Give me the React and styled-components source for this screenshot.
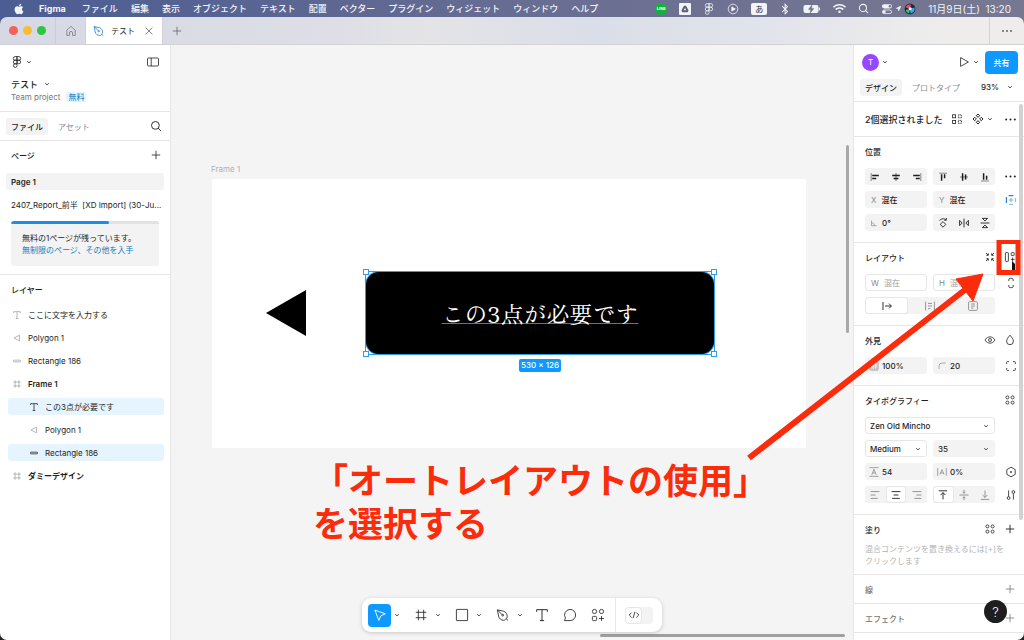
import React from 'react'
import styled, { createGlobalStyle, css } from "styled-components";
import { FaApple, FaBluetoothB, FaWifi, FaLocationArrow } from "react-icons/fa"

const GlobalStyle = createGlobalStyle`
  * {
    box-sizing: border-box;
  }
  body {
    margin: 0;
    font-family: Inter, "Noto Sans CJK JP", sans-serif;
    font-size: 8px;
    color: #1e1e1e;
  }
  button, input, select {
    font: inherit;
    color: inherit;
    border: 0;
    padding: 0;
    margin: 0;
    background: none;
  }
  h1, h2, p, ul {
    margin: 0;
    padding: 0;
    font-size: inherit;
    font-weight: inherit;
  }
  ul {
    list-style: none;
  }
`;

// every glyph lives in a 12 x 12 box
const glyphs = {
  figma: <><path d="M6 .6H4.1a1.8 1.8 0 0 0 0 3.6H6zM6 .6h1.9a1.8 1.8 0 0 1 0 3.6H6zM6 4.2H4.1a1.8 1.8 0 0 0 0 3.6H6zM6 7.8H4.1A1.8 1.8 0 1 0 6 9.6z" /><circle cx="7.8" cy="6" r="1.8" /></>,
  chevron: <path d="M4.2 5.2 6 6.9l1.8-1.7" />,
  panel: <><rect x=".5" y="2" width="11" height="8" rx="1" /><path d="M4.2 2v8" /></>,
  search: <><circle cx="5.4" cy="5.4" r="3.9" /><path d="m8.2 8.2 2.8 2.8" /></>,
  plus: <path d="M6 1.8v8.4M1.8 6h8.4" />,
  close: <path d="m2.6 2.6 6.8 6.8m0-6.8L2.6 9.4" />,
  home: <path d="M1.8 5.2 6 1.4l4.2 3.8v5.2H7.6V8a1.6 1.6 0 0 0-3.2 0v2.4H1.8z" />,
  pen: <><path d="M1.2 1.6 6.4 2.7c2 .5 3.5 2.8 3.2 4.9l-.1.7-2.2 2.1-.8.1C4.4 10.5 2.6 9 2.2 6.9zM1.2 1.6l3.9 4M8.7 9.3l1.6 1.3" /><circle cx="5.7" cy="6.1" r=".8" /></>,
  text: <path d="M2 3.6V2h8v1.6M6 2v8.2M4.4 10.2h3.2" />,
  polygon: <path d="M9 2.6v6.8L2.4 6z" />,
  bar: <rect x="1.8" y="5" width="8.4" height="2" rx=".4" />,
  frame: <path d="M3.7 1.5v9M8.3 1.5v9M1.5 3.7h9M1.5 8.3h9" />,
  play: <path d="M2.6 1.6 10.4 6l-7.8 4.4z" strokeLinejoin="round" />,
  playCircle: <><circle cx="6" cy="6" r="4.8" /><path d="M4.8 3.9 8.3 6l-3.5 2.1z" fill="currentColor" /></>,
  dots: <g fill="currentColor" stroke="none"><circle cx="2" cy="6" r=".9" /><circle cx="6" cy="6" r=".9" /><circle cx="10" cy="6" r=".9" /></g>,
  match: <><rect x="1.6" y="1.8" width="3" height="3" /><rect x="1.6" y="7.4" width="3" height="3" /><rect x="7.4" y="1.8" width="3" height="3" strokeDasharray="1.2 .5" /><rect x="7.4" y="7.4" width="3" height="3" strokeDasharray="1.2 .5" /></>,
  component: <path d="m6 1 1.7 1.7L6 4.4 4.3 2.7zM6 7.6l1.7 1.7L6 11 4.3 9.3zM2.7 4.3 4.4 6 2.7 7.7 1 6zM9.3 4.3 11 6 9.3 7.7 7.6 6z" strokeWidth="1" />,
  alignLeft: <><path d="M2.2 2v8" strokeWidth=".5" /><path d="M3.2 4.6h6.6M3.2 7.6h4" strokeWidth="1.5" /></>,
  alignCenter: <><path d="M6 2v8" strokeWidth=".6" /><path d="M2.2 4.6h7.6M3.6 7.6h4.8" strokeWidth="1.5" /></>,
  alignRight: <><path d="M9.8 2v8" strokeWidth=".5" /><path d="M8.8 4.6H2.2M8.8 7.6h-4" strokeWidth="1.5" /></>,
  alignTop: <><path d="M2 2.2h8" strokeWidth=".5" /><path d="M4.6 3.2v6.6M7.6 3.2v4" strokeWidth="1.5" /></>,
  alignMiddle: <><path d="M2 6h8" strokeWidth=".6" /><path d="M4.6 2.2v7.6M7.6 3.6v4.8" strokeWidth="1.5" /></>,
  alignBottom: <><path d="M2 10h8" strokeWidth=".5" /><path d="M4.6 8.8V2.2M7.6 8.8v-4" strokeWidth="1.5" /></>,
  constraint: <><path d="M1.4 3v6" strokeWidth="1.2" /><path d="M10.6 4v4" strokeWidth=".6" /><path d="M3.6 1.6h4.800" strokeWidth="1.2" /><path d="M4 10.4h4M6 3.8v4.4M3.8 6h4.4" strokeWidth=".6" /></>,
  angle: <path d="M3 3v6.2h6.2M3 5.6a3.6 3.6 0 0 1 3.6 3.6" />,
  rotate: <><path d="m6 4.6 2.8 2.8L6 10.2 3.2 7.4z" strokeLinejoin="round" /><path d="M2.600 3.600c1.600-2.200 4.600-2.400 6.400-.6M9.300 1v2.200H7.200" /></>,
  flipH: <path d="M6 1.6v8.8M1.6 3.4v5.2L4.2 6zM10.4 3.4v5.2L7.8 6z" />,
  flipV: <path d="M1.6 6h8.8M3.4 1.4h5.2L6 4zM3.4 10.6h5.2L6 8z" />,
  shrink: <path d="M4.300 2.400v1.900H2.400M7.700 2.400v1.900h1.900M4.300 9.600V7.700H2.400M7.700 9.600V7.700h1.900M2 2l2 2M10 2 8 4M2 10l2-2M10 10 8 8" strokeWidth=".9" />,
  autoLayout: <><rect x="1.4" y="1.6" width="3" height="8.8" rx=".6" /><rect x="7.2" y="1.6" width="3" height="3" rx=".6" /><path d="M8.7 6.4v4M6.8 8.4h3.8" /></>,
  link: <path d="M3.8 4V2.8a1.4 1.4 0 0 1 1.4-1.4h1.6a1.4 1.4 0 0 1 1.4 1.4V4M3.8 8v1.2a1.4 1.4 0 0 0 1.4 1.4h1.6a1.4 1.4 0 0 0 1.4-1.4V8" />,
  autoWidth: <path d="M2 2v8M4 6h6.4M8 3.6 10.4 6 8 8.4" />,
  autoHeight: <path d="M1.6 1.6v8.8M10.4 1.6v8.8M4 3.4h4M4 6h4M4 8.6h2.4" />,
  fixedSize: <><rect x="1.6" y="1.6" width="8.8" height="8.8" rx="1" /><path d="M4 4h4M4 6h4M4 8h2.4" /></>,
  eye: <><path d="M1 6c2.6-4.2 7.4-4.2 10 0-2.6 4.2-7.4 4.2-10 0z" /><circle cx="6" cy="6" r="1.5" /></>,
  drop: <path d="M6 1.2c2 2.4 3.4 4 3.4 6A3.4 3.4 0 0 1 6 10.7a3.4 3.4 0 0 1-3.4-3.5c0-2 1.400-3.600 3.400-6z" />,
  opacity: <><rect x="1.200" y="1.200" width="9.600" height="9.600" rx=".6" /><path d="M8.800 1.800v8.400M6.600 1.800v8.400M4 10.200V8M1.800 8.600h8.400" strokeWidth=".3" /></>,
  radius: <path d="M2.4 9.6V6a3.600 3.600 0 0 1 3.600-3.600h4.400" />,
  corners: <path d="M1.6 4V2.6a1 1 0 0 1 1-1H4M8 1.6h1.4a1 1 0 0 1 1 1V4M10.4 8v1.4a1 1 0 0 1-1 1H8M4 10.4H2.6a1 1 0 0 1-1-1V8" />,
  styles: <><circle cx="3.4" cy="3.4" r="1.5" /><circle cx="8.6" cy="3.4" r="1.5" /><circle cx="3.4" cy="8.6" r="1.5" /><circle cx="8.6" cy="8.6" r="1.5" /></>,
  lineHeight: <path d="M.6.8h10.800M.6 11.200h10.800M3.400 9.200 6 2.800l2.600 6.400M4.300 7.200h3.400" />,
  spacing: <path d="M.8 1.4v9.2M11.2 1.4v9.2M3.6 9 6 3.2 8.4 9M4.4 7.2h3.2" />,
  variable: <><path d="m6 1.2 4.2 2.4v4.8L6 10.8 1.8 8.4V3.6z" strokeLinejoin="round" /><circle cx="6" cy="6" r=".5" fill="currentColor" /></>,
  textLeft: <path d="M1.6 2.6h8.8M1.6 6h5M1.6 9.4h7" />,
  textCenter: <path d="M1.6 2.6h8.8M3.6 6h4.8M2.2 9.4h7.6" />,
  textRight: <path d="M1.6 2.6h8.8M5.4 6h5M3.4 9.4h7" />,
  toTop: <path d="M1.8 1.8h8.4M6 10.4V3.6M3.6 6 6 3.6 8.4 6" />,
  toMiddle: <path d="M1.4 6h9.2M6 .8v3.4M4.6 3 6 4.3 7.4 3M6 11.2V7.8M4.6 9 6 7.7 7.4 9" />,
  toBottom: <path d="M1.8 10.4h8.4M6 1.6v6.8M3.6 6 6 8.4 8.4 6" />,
  sliders: <><path d="M3.6 1.4v6.2M8.4 4.4v6.2" /><circle cx="3.6" cy="9" r="1.4" /><circle cx="8.4" cy="3" r="1.4" /></>,
  cursor: <path d="m1.6 1.8 9 3.2-3.9 1.7L5 10.6z" strokeLinejoin="round" />,
  square: <rect x="1.2" y="1.2" width="9.6" height="9.6" rx=".3" />,
  bubble: <path d="M6 1.2a4.8 4.8 0 1 1 0 9.6H1.200l.9-2.200A4.800 4.800 0 0 1 6 1.200z" strokeLinejoin="round" />,
  actions: <><circle cx="3" cy="3" r="1.8" /><circle cx="9" cy="3" r="1.8" /><rect x="1.2" y="7.2" width="3.6" height="3.6" rx=".8" /><path d="M9 6.9v4.2M6.9 9h4.2" /></>,
  code: <path d="M3.6 3.6 1.2 6l2.4 2.4M8.4 3.6 10.8 6 8.4 8.4M7 2.8 5 9.2" />,
  drive: <><rect width="12" height="12" rx="1" fill="#f2f3f7" stroke="none" /><path d="M5 2.8h2l2.6 4.6-1 1.8H3.4l-1-1.8z" fill="#5a5f74" stroke="none" /><path d="m6 5 1.3 2.2H4.7z" fill="#f2f3f7" stroke="none" /></>,
  siri: <><circle cx="6" cy="6" r="5.4" fill="#26262e" stroke="none" /><path d="M6 6 1.6 4.4A4.6 4.6 0 0 1 7 1.6z" fill="#f0467e" stroke="none" /><path d="m6 6 4.400-1.600A4.600 4.600 0 0 1 6.600 10.400z" fill="#33a9f0" stroke="none" /><path d="M6 6 5 10.400A4.600 4.600 0 0 1 1.600 7z" fill="#32c28c" stroke="none" /><circle cx="6.2" cy="5.8" r="1.5" fill="#fff" stroke="none" /></>,
  controls: <><rect x="1" y="1.2" width="10" height="4.2" rx="2.1" fill="currentColor" stroke="none" /><circle cx="8.9" cy="3.3" r="1.3" fill="#74779a" stroke="none" /><rect x="1.4" y="7" width="9.2" height="3.6" rx="1.8" /><circle cx="3.2" cy="8.8" r="1.5" fill="currentColor" stroke="none" /></>,
}

const Icon = ({ name, size = 12, weight = 0.8, color }) => (
  <Glyph viewBox="0 0 12 12" width={size} height={size} strokeWidth={weight} color={color} aria-hidden="true">
    {glyphs[name]}
  </Glyph>
)

const menus = ["ファイル", "編集", "表示", "オブジェクト", "テキスト", "配置", "ベクター", "プラグイン", "ウィジェット", "ウィンドウ", "ヘルプ"]

const layers = [
  { icon: "text", name: "ここに文字を入力する" },
  { icon: "polygon", name: "Polygon 1" },
  { icon: "bar", name: "Rectangle 186" },
  { icon: "frame", name: "Frame 1", bold: true },
  { icon: "text", name: "この3点が必要です", child: true, selected: true },
  { icon: "polygon", name: "Polygon 1", child: true },
  { icon: "bar", name: "Rectangle 186", child: true, selected: true },
  { icon: "frame", name: "ダミーデザイン", bold: true },
]

const MenuBar = () => (
  <MenuWrapper>
    <FaApple size={12} />
    <MenuList>
      <MenuButton $bold>Figma</MenuButton>
      {menus.map((menu) => <MenuButton key={menu}>{menu}</MenuButton>)}
    </MenuList>
    <StatusList>
      <LineBadge>LINE</LineBadge>
      <Icon name="drive" />
      <Icon name="figma" />
      <Icon name="playCircle" />
      <InputSource>あ</InputSource>
      <FaBluetoothB size={12} />
      <svg width="18" height="10" viewBox="0 0 18 10" aria-hidden="true">
        <rect x=".5" y="1" width="15" height="8" rx="2" fill="#f2f3f7" />
        <path d="M16.5 3.6v2.8" stroke="#f2f3f7" />
        <path d="M9.2.6 5.4 5.6h2.4L7 9.4l3.8-5H8.4z" fill="#6b6f8c" stroke="#6b6f8c" strokeWidth=".4" />
      </svg>
      <FaWifi size={13} />
      <Icon name="search" size={11} weight={1.1} />
      <StatusGroup>
        <Icon name="controls" />
        <FaLocationArrow size={5} />
        <Icon name="siri" />
      </StatusGroup>
      <Clock>11月9日(土)&nbsp; 13:20</Clock>
    </StatusList>
  </MenuWrapper>
)

const TabBar = () => (
  <TabWrapper>
    <Lights>
      <Light $color="#f4605a" />
      <Light $color="#f8bc33" />
      <Light $color="#2cc640" />
    </Lights>
    <HomeButton aria-label="ホーム"><Icon name="home" color="#777" /></HomeButton>
    <FileTab>
      <Icon name="pen" color="#1b7fc4" />
      <span>テスト</span>
      <IconButton aria-label="閉じる"><Icon name="close" color="#666" /></IconButton>
    </FileTab>
    <NewTab aria-label="新規タブ"><Icon name="plus" color="#666" /></NewTab>
    <MoreTab aria-label="その他"><Icon name="dots" color="#555" /></MoreTab>
  </TabWrapper>
)

const LeftPanel = () => (
  <LeftWrapper>
    <FileHeader>
      <HeaderRow>
        <LogoButton aria-label="メインメニュー"><Icon name="figma" /><Icon name="chevron" /></LogoButton>
        <IconButton aria-label="UIを最小化"><Icon name="panel" /></IconButton>
      </HeaderRow>
      <FileName>テスト<Icon name="chevron" /></FileName>
      <Project>Team project <PlanBadge>無料</PlanBadge></Project>
    </FileHeader>
    <PanelTabs>
      <PanelTab $active>ファイル</PanelTab>
      <PanelTab>アセット</PanelTab>
      <IconButton aria-label="検索"><Icon name="search" weight={0.9} /></IconButton>
    </PanelTabs>
    <Pages>
      <PanelTitle>
        <h2>ページ</h2>
        <IconButton aria-label="ページを追加"><Icon name="plus" /></IconButton>
      </PanelTitle>
      <PageButton $active>Page 1</PageButton>
      <PageButton>2407_Report_前半&nbsp; [XD Import] (30-Ju...</PageButton>
      <Quota>
        <QuotaBar><QuotaFill /></QuotaBar>
        <QuotaText>
          <p>無料の1ページが残っています。</p>
          <a href="#upgrade">無制限のページ、その他を入手</a>
        </QuotaText>
      </Quota>
    </Pages>
    <PanelTitle><h2>レイヤー</h2></PanelTitle>
    <LayerList>
      {layers.map((layer, i) => (
        <li key={i}>
          <LayerButton $bold={layer.bold} $child={layer.child} $selected={layer.selected}>
            <Icon name={layer.icon} size={10} weight={1} color={layer.selected ? "#333" : "#aaa"} />
            {layer.name}
          </LayerButton>
        </li>
      ))}
    </LayerList>
  </LeftWrapper>
)

const Canvas = () => (
  <CanvasWrapper>
    <FrameLabel>Frame 1</FrameLabel>
    <Frame>
      <Triangle viewBox="0 0 40 46"><path d="M40 0v46L0 23z" /></Triangle>
      <Selection>
        <Shape><ShapeText>この3点が必要です</ShapeText></Shape>
        <Handle $top $left /><Handle $top /><Handle $left /><Handle />
        <SizeBadge>530 × 126</SizeBadge>
      </Selection>
    </Frame>
    <ScrollY />
    <ScrollX />
    <Toolbar>
      <ToolButton $active aria-label="移動"><Icon name="cursor" size={14} /></ToolButton>
      <ToolMenu aria-label="移動ツール"><Icon name="chevron" /></ToolMenu>
      <ToolButton aria-label="フレーム"><Icon name="frame" size={14} weight={0.7} /></ToolButton>
      <ToolMenu aria-label="フレームツール"><Icon name="chevron" /></ToolMenu>
      <ToolButton aria-label="長方形"><Icon name="square" size={14} weight={0.7} /></ToolButton>
      <ToolMenu aria-label="シェイプツール"><Icon name="chevron" /></ToolMenu>
      <ToolButton aria-label="ペン"><Icon name="pen" size={14} weight={0.7} /></ToolButton>
      <ToolMenu aria-label="描画ツール"><Icon name="chevron" /></ToolMenu>
      <ToolButton aria-label="テキスト"><Icon name="text" size={16} weight={0.7} /></ToolButton>
      <ToolButton aria-label="コメント"><Icon name="bubble" size={14} weight={0.7} /></ToolButton>
      <ToolButton aria-label="アクション"><Icon name="actions" size={14} weight={0.7} /></ToolButton>
      <ToolDivider />
      <DevToggle aria-label="開発モード"><DevThumb><Icon name="code" /></DevThumb></DevToggle>
    </Toolbar>
  </CanvasWrapper>
)

const Segments = ({ items, active, ...rest }) => (
  <Segment {...rest}>
    {items.map(([icon, label], i) => (
      <SegmentButton key={icon} $active={active === i} $dim={active !== undefined && active !== i} aria-label={label}>
        <Icon name={icon} weight={0.9} />
      </SegmentButton>
    ))}
  </Segment>
)

const RightPanel = () => (
  <RightWrapper>
    <RightHeader>
      <Avatar>T</Avatar>
      <Icon name="chevron" />
      <Spacer />
      <IconButton aria-label="プレゼンテーション"><Icon name="play" /></IconButton>
      <Icon name="chevron" />
      <ShareButton>共有</ShareButton>
    </RightHeader>
    <ModeTabs>
      <PanelTab $active>デザイン</PanelTab>
      <PanelTab>プロトタイプ</PanelTab>
      <Zoom>93%<Icon name="chevron" /></Zoom>
    </ModeTabs>
    <Selected>
      <h1>2個選択されました</h1>
      <IconButton aria-label="一致するレイヤー"><Icon name="match" /></IconButton>
      <LogoButton aria-label="コンポーネント"><Icon name="component" /><Icon name="chevron" /></LogoButton>
      <IconButton aria-label="その他"><Icon name="dots" size={13} /></IconButton>
    </Selected>

    <Section>
      <SectionTitle><h2>位置</h2></SectionTitle>
      <FieldGrid>
        <Segments items={[["alignLeft", "左揃え"], ["alignCenter", "水平中央"], ["alignRight", "右揃え"]]} />
        <Segments items={[["alignTop", "上揃え"], ["alignMiddle", "垂直中央"], ["alignBottom", "下揃え"]]} />
        <IconButton aria-label="整列オプション"><Icon name="dots" size={13} /></IconButton>
        <Field><i>X</i><input aria-label="X" defaultValue="混在" /></Field>
        <Field><i>Y</i><input aria-label="Y" defaultValue="混在" /></Field>
        <IconButton aria-label="制約"><Icon name="constraint" color="#2f86c9" /></IconButton>
        <Field><Icon name="angle" size={10} color="#888" /><input aria-label="回転" defaultValue="0°" /></Field>
        <Segments items={[["rotate", "90°回転"], ["flipH", "左右反転"], ["flipV", "上下反転"]]} />
      </FieldGrid>
    </Section>

    <Section>
      <SectionTitle>
        <h2>レイアウト</h2>
        <IconButton aria-label="サイズ自動調整"><Icon name="shrink" /></IconButton>
        <IconButton aria-label="オートレイアウトの使用"><Icon name="autoLayout" /></IconButton>
      </SectionTitle>
      <FieldGrid>
        <Field $outline><i>W</i><input aria-label="W" defaultValue="混在" /></Field>
        <Field $outline><i>H</i><input aria-label="H" defaultValue="混在" /></Field>
        <IconButton aria-label="縦横比を固定"><Icon name="link" /></IconButton>
        <WideSegments active={0} items={[["autoWidth", "幅の自動調整"], ["autoHeight", "高さの自動調整"], ["fixedSize", "固定サイズ"]]} />
      </FieldGrid>
    </Section>

    <Section>
      <SectionTitle>
        <h2>外見</h2>
        <IconButton aria-label="表示"><Icon name="eye" /></IconButton>
        <IconButton aria-label="ブレンドモード"><Icon name="drop" /></IconButton>
      </SectionTitle>
      <FieldGrid>
        <Field><Icon name="opacity" size={10} color="#777" /><input aria-label="不透明度" defaultValue="100%" /></Field>
        <Field><Icon name="radius" size={10} color="#888" /><input aria-label="角の半径" defaultValue="20" /></Field>
        <IconButton aria-label="個別の角"><Icon name="corners" /></IconButton>
      </FieldGrid>
    </Section>

    <Section>
      <SectionTitle>
        <h2>タイポグラフィー</h2>
        <IconButton aria-label="テキストスタイル"><Icon name="styles" /></IconButton>
      </SectionTitle>
      <FieldGrid>
        <SelectBox $wide>
          <select aria-label="フォント"><option>Zen Old Mincho</option></select>
          <Icon name="chevron" />
        </SelectBox>
        <span />
        <SelectBox>
          <select aria-label="太さ"><option>Medium</option></select>
          <Icon name="chevron" />
        </SelectBox>
        <SelectBox $filled>
          <select aria-label="文字サイズ"><option>35</option></select>
          <Icon name="chevron" />
        </SelectBox>
        <span />
        <Field><Icon name="lineHeight" size={10} color="#777" /><input aria-label="行間" defaultValue="54" /></Field>
        <Field><Icon name="spacing" size={10} color="#777" /><input aria-label="文字間隔" defaultValue="0%" /></Field>
        <IconButton aria-label="バリアブル"><Icon name="variable" /></IconButton>
        <Segments active={1} items={[["textLeft", "左"], ["textCenter", "中央"], ["textRight", "右"]]} />
        <Segments active={0} items={[["toTop", "上"], ["toMiddle", "中"], ["toBottom", "下"]]} />
        <IconButton aria-label="タイプの設定"><Icon name="sliders" /></IconButton>
      </FieldGrid>
    </Section>

    <Section $compact>
      <SectionTitle>
        <h2>塗り</h2>
        <IconButton aria-label="スタイル"><Icon name="styles" /></IconButton>
        <IconButton aria-label="塗りを追加"><Icon name="plus" weight={0.9} /></IconButton>
      </SectionTitle>
      <Note>混合コンテンツを置き換えるには[+]を<br />クリックします</Note>
    </Section>
    <Section $compact $muted>
      <SectionTitle><h2>線</h2><IconButton aria-label="線を追加"><Icon name="plus" /></IconButton></SectionTitle>
    </Section>
    <Section $compact $muted>
      <SectionTitle><h2>エフェクト</h2><IconButton aria-label="エフェクトを追加"><Icon name="plus" /></IconButton></SectionTitle>
    </Section>
    <PanelScroll />
    <HelpButton aria-label="ヘルプ">?</HelpButton>
  </RightWrapper>
)

const App = () => {
  return (
    <Desktop>
      <GlobalStyle />
      <MenuBar />
      <Window>
        <TabBar />
        <Workspace>
          <LeftPanel />
          <Canvas />
          <RightPanel />
        </Workspace>
      </Window>
      <Callout>
        <p>「オートレイアウトの使用」</p>
        <p>を選択する</p>
      </Callout>
      <Arrow viewBox="0 0 280 230" aria-hidden="true">
        <path d="M5 218 222 49" stroke="#fb2c0b" strokeWidth="6" />
        <path d="M239 34 212 39l17 22z" fill="#fb2c0b" stroke="#fb2c0b" />
        <rect x="255" y="1.5" width="19" height="31" fill="none" stroke="#fb2c0b" strokeWidth="5" />
        <path d="M268 21v9h3v-6z" fill="#111" />
      </Arrow>
    </Desktop>
  )
}

const flexCenter = css`
  display: flex;
  align-items: center;
`;

const Glyph = styled.svg`
  display: block;
  flex: none;
  fill: none;
  stroke: currentColor;
`;

const Desktop = styled.div`
  position: relative;
  display: flex;
  flex-direction: column;
  height: 100vh;
  overflow: hidden;
  background: linear-gradient(90deg, #4b5d92, #6a6e92 55%, #777890) top / 100% 40px no-repeat, #222;
`;

const MenuWrapper = styled.header`
  ${flexCenter}
  height: 17px;
  flex: none;
  padding: 0 13px;
  color: #f2f3f7;
  font-size: 9px;
  font-weight: 500;
  white-space: nowrap;
`;

const MenuList = styled.nav`
  display: flex;
  gap: 13px;
  margin-left: 14px;
`;

const MenuButton = styled.button`
  font-weight: ${({ $bold }) => ($bold ? 700 : 500)};
  margin-right: ${({ $bold }) => ($bold ? "3px" : 0)};
`;

const StatusList = styled.div`
  ${flexCenter}
  gap: 12px;
  margin-left: auto;
`;

const StatusGroup = styled.div`
  ${flexCenter}
  gap: 3px;
`;

const Clock = styled.time`
  font-size: 10px;
  font-weight: 400;
`;

const LineBadge = styled.span`
  ${flexCenter}
  justify-content: center;
  width: 12px;
  height: 12px;
  border-radius: 50%;
  background: #0fb43c;
  color: #fff;
  font-size: 4px;
  font-weight: 700;
`;

const InputSource = styled.span`
  ${flexCenter}
  justify-content: center;
  width: 16px;
  height: 12px;
  border-radius: 2px;
  background: #f2f3f7;
  color: #555a72;
  font-size: 8px;
`;

const Window = styled.div`
  flex: 1;
  min-height: 0;
  display: flex;
  flex-direction: column;
  border-radius: 7px;
  overflow: hidden;
`;

const TabWrapper = styled.div`
  display: flex;
  flex: none;
  height: 28px;
  border-bottom: 1px solid #d2d2d6;
  background: linear-gradient(90deg, #d6d9e4, #dddee6 32%, #e4e4e7 42%, #dadee8 58%, #e2e4eb 75%, #eeedec 92%);
`;

const Lights = styled.div`
  ${flexCenter}
  gap: 5px;
  width: 56px;
  padding-left: 9px;
  border-right: 1px solid #cacdd8;
`;

const Light = styled.span`
  width: 9px;
  height: 9px;
  border-radius: 50%;
  background: ${({ $color }) => $color};
`;

const IconButton = styled.button`
  ${flexCenter}
  justify-content: center;
  height: 17px;
`;

const HomeButton = styled(IconButton)`
  width: 29px;
  height: 100%;
`;

const FileTab = styled.div`
  ${flexCenter}
  gap: 6px;
  width: 78px;
  padding: 0 7px;
  background: #fff;
  border: 1px solid #d2d2d6;
  border-width: 0 1px;
  button {
    margin-left: auto;
  }
`;

const NewTab = styled(IconButton)`
  width: 27px;
  height: 100%;
`;

const MoreTab = styled(IconButton)`
  width: 35px;
  height: 100%;
  margin-left: auto;
  border-left: 1px solid #d4d4d6;
`;

const Workspace = styled.div`
  flex: 1;
  min-height: 0;
  display: flex;
`;

const LeftWrapper = styled.aside`
  flex: 0 0 171px;
  border-right: 1px solid #e6e6e6;
  background: #fff;
  overflow: hidden;
`;

const FileHeader = styled.div`
  padding: 5px 11px 8px;
  border-bottom: 1px solid #e6e6e6;
`;

const HeaderRow = styled.div`
  ${flexCenter}
  justify-content: space-between;
  height: 24px;
  margin-bottom: 3px;
`;

const LogoButton = styled.button`
  ${flexCenter}
`;

const FileName = styled.button`
  ${flexCenter}
  gap: 3px;
  height: 14px;
  font-size: 9px;
  font-weight: 500;
`;

const Project = styled.div`
  ${flexCenter}
  gap: 6px;
  height: 12px;
  color: #777;
`;

const PlanBadge = styled.span`
  padding: 0 2px;
  border-radius: 2px;
  background: #e5f4ff;
  color: #0f7cc0;
  line-height: 10px;
`;

const PanelTabs = styled.div`
  ${flexCenter}
  gap: 5px;
  height: 29px;
  padding: 0 8px 0 6px;
  border-bottom: 1px solid #e6e6e6;
  ${IconButton} {
    margin-left: auto;
  }
`;

const PanelTab = styled.button`
  height: 17px;
  padding: 0 5px;
  border-radius: 3px;
  white-space: nowrap;
  font-weight: ${({ $active }) => ($active ? 500 : 400)};
  color: ${({ $active }) => ($active ? "#1e1e1e" : "#8a8a8a")};
  background: ${({ $active }) => ($active ? "#f3f3f3" : "none")};
`;

const PanelTitle = styled.div`
  ${flexCenter}
  justify-content: space-between;
  height: 28px;
  padding: 0 8px 0 11px;
  font-weight: 500;
`;

const Pages = styled.section`
  padding-bottom: 8px;
  border-bottom: 1px solid #e6e6e6;
`;

const PageButton = styled.button`
  display: block;
  width: calc(100% - 12px);
  height: 17px;
  margin: 4px 6px 6px;
  padding: 0 0 0 5px;
  border-radius: 3px;
  text-align: left;
  white-space: nowrap;
  font-weight: ${({ $active }) => ($active ? 600 : 400)};
  background: ${({ $active }) => ($active ? "#f3f3f3" : "none")};
  & + & {
    margin-top: 0;
  }
`;

const Quota = styled.div`
  margin: 8px 11px 0;
  border-radius: 3px;
  overflow: hidden;
  background: #f3f3f3;
`;

const QuotaBar = styled.div`
  height: 3px;
  background: #e2e2e2;
`;

const QuotaFill = styled.div`
  width: 66%;
  height: 3px;
  border-radius: 2px;
  background: #1b8fe6;
`;

const QuotaText = styled.div`
  padding: 8px 11px 10px;
  line-height: 12px;
  a {
    display: block;
    color: #0f7cc0;
    text-decoration: none;
  }
`;

const LayerList = styled.ul`
  display: grid;
  gap: 6px;
  padding: 3px 6px 0 8px;
`;

const LayerButton = styled.button`
  ${flexCenter}
  gap: 6px;
  width: 100%;
  height: 17px;
  padding-left: ${({ $child }) => ($child ? "21px" : "4px")};
  border-radius: 3px;
  font-weight: ${({ $bold }) => ($bold ? 600 : 400)};
  background: ${({ $selected }) => ($selected ? "#e5f4ff" : "none")};
`;

const CanvasWrapper = styled.main`
  position: relative;
  flex: 1;
  min-width: 0;
  overflow: hidden;
  background: #f4f4f4;
`;

const FrameLabel = styled.span`
  position: absolute;
  left: 40px;
  top: 119px;
  color: #b0b0b0;
`;

const Frame = styled.div`
  position: absolute;
  left: 41px;
  top: 134px;
  width: 594px;
  height: 269px;
  background: #fff;
`;

const Triangle = styled.svg`
  position: absolute;
  left: 54px;
  top: 111px;
  width: 40px;
`;

const Selection = styled.div`
  position: absolute;
  left: 153px;
  top: 92px;
  width: 350px;
  height: 84px;
  border: 1px solid #2f9de8;
`;

const Shape = styled.div`
  ${flexCenter}
  justify-content: center;
  height: 100%;
  border-radius: 13px;
  background: #000;
  box-shadow: 0 0 0 1px #2f9de8;
`;

const ShapeText = styled.span`
  color: #fff;
  font-family: "Zen Old Mincho", "Noto Serif CJK JP", "Liberation Serif", "Noto Sans CJK JP", serif;
  font-size: 23px;
  font-weight: 400;
  line-height: 30px;
  text-decoration: underline #2f7fd0 1px;
  text-underline-offset: 0;
  text-decoration-skip-ink: none;
`;

const Handle = styled.span`
  position: absolute;
  width: 6px;
  height: 6px;
  border: 1px solid #2f9de8;
  background: #fff;
  ${({ $top }) => ($top ? "top" : "bottom")}: -3px;
  ${({ $left }) => ($left ? "left" : "right")}: -3px;
`;

const SizeBadge = styled.span`
  position: absolute;
  top: calc(100% + 5px);
  left: 50%;
  transform: translateX(-50%);
  padding: 0 2px;
  border-radius: 2px;
  background: #0d99ff;
  color: #fff;
  font-weight: 500;
  line-height: 13px;
  white-space: nowrap;
`;

const ScrollY = styled.div`
  position: absolute;
  top: 100px;
  right: 4px;
  width: 3px;
  height: 188px;
  border-radius: 2px;
  background: #a8a8a8;
`;

const ScrollX = styled.div`
  position: absolute;
  bottom: 3px;
  right: 8px;
  width: 245px;
  height: 3px;
  border-radius: 2px;
  background: #a0a0a0;
`;

const Toolbar = styled.div`
  ${flexCenter}
  position: absolute;
  bottom: 8px;
  left: 50%;
  transform: translateX(-50%);
  height: 34px;
  padding: 0 9px 0 6px;
  border-radius: 9px;
  background: #fff;
  box-shadow: 0 1px 4px rgba(0, 0, 0, 0.18);
`;

const ToolButton = styled.button`
  ${flexCenter}
  justify-content: center;
  width: 23px;
  height: 23px;
  border-radius: 4px;
  color: ${({ $active }) => ($active ? "#fff" : "#1e1e1e")};
  background: ${({ $active }) => ($active ? "#0d99ff" : "none")};
  & + & {
    margin-left: 5px;
  }
`;

const ToolMenu = styled.button`
  width: 12px;
  margin-right: 6px;
  & + ${ToolButton}:has(+ ${ToolButton}) {
    margin-left: -2px;
  }
`;

const ToolDivider = styled.span`
  width: 1px;
  height: 100%;
  margin: 0 9px 0 6px;
  background: #e8e8e8;
`;

const DevToggle = styled.button`
  ${flexCenter}
  width: 28px;
  height: 17px;
  border-radius: 4px;
  background: #f3f3f3;
`;

const DevThumb = styled.span`
  ${flexCenter}
  justify-content: center;
  width: 17px;
  height: 17px;
  border: 1px solid #e6e6e6;
  border-radius: 4px;
  background: #fff;
`;

const RightWrapper = styled.aside`
  position: relative;
  flex: 0 0 171px;
  border-left: 1px solid #e6e6e6;
  background: #fff;
  overflow: hidden;
`;

const RightHeader = styled.div`
  ${flexCenter}
  height: 34px;
  padding: 0 6px 0 8px;
`;

const Avatar = styled.span`
  ${flexCenter}
  justify-content: center;
  width: 17px;
  height: 17px;
  border-radius: 50%;
  background: #9747ff;
  color: #fff;
`;

const Spacer = styled.span`
  flex: 1;
`;

const ShareButton = styled.button`
  width: 33px;
  height: 23px;
  margin-left: 3px;
  border-radius: 4px;
  background: #0d99ff;
  color: #fff;
  font-weight: 500;
`;

const ModeTabs = styled.div`
  ${flexCenter}
  gap: 5px;
  height: 23px;
  padding: 0 8px 6px 6px;
  border-bottom: 1px solid #e6e6e6;
`;

const Zoom = styled.button`
  ${flexCenter}
  gap: 5px;
  margin-left: auto;
  font-weight: 500;
`;

const Selected = styled.div`
  ${flexCenter}
  justify-content: space-between;
  height: 35px;
  padding: 0 7px 0 11px;
  border-bottom: 1px solid #e6e6e6;
  font-size: 9px;
  font-weight: 500;
`;

const SectionTitle = styled.div`
  ${flexCenter}
  height: 31px;
  padding-bottom: 3px;
  h2 {
    flex: 1;
  }
  ${IconButton} {
    width: 20px;
  }
`;

const Section = styled.section`
  padding: 0 4px 11px 11px;
  border-bottom: 1px solid #e6e6e6;
  font-weight: 500;
  ${({ $muted }) => $muted && "color: #777;"}
  ${({ $compact }) => $compact && css`
    padding-bottom: 0;
    ${SectionTitle} {
      height: 28px;
      padding-bottom: 0;
    }
  `}
`;

const Note = styled.p`
  padding-bottom: 7px;
  color: #b3b3b3;
  font-weight: 400;
  line-height: 12px;
  white-space: nowrap;
`;

const FieldGrid = styled.div`
  display: grid;
  grid-template-columns: 1fr 1fr 19px;
  grid-auto-rows: 17px;
  gap: 6px;
`;

const Field = styled.label`
  ${flexCenter}
  gap: 5px;
  min-width: 0;
  padding: 0 5px;
  border-radius: 3px;
  background: ${({ $outline }) => ($outline ? "#fff" : "#f3f3f3")};
  border: 1px solid ${({ $outline }) => ($outline ? "#e6e6e6" : "#f3f3f3")};
  ${Glyph} {
    margin: 0 -2px;
  }
  i {
    font-style: normal;
    font-weight: 400;
    color: #8a8a8a;
  }
  input {
    width: 100%;
    min-width: 0;
    color: ${({ $outline }) => ($outline ? "#b3b3b3" : "#1e1e1e")};
  }
`;

const Segment = styled.div`
  display: grid;
  grid-template-columns: repeat(3, 1fr);
  border-radius: 3px;
  background: #f3f3f3;
`;

const SegmentButton = styled.button`
  ${flexCenter}
  justify-content: center;
  border: 1px solid ${({ $active }) => ($active ? "#e6e6e6" : "transparent")};
  border-radius: 3px;
  background: ${({ $active }) => ($active ? "#fff" : "none")};
  color: ${({ $dim }) => ($dim ? "#8a8a8a" : "#1e1e1e")};
`;

const WideSegments = styled(Segments)`
  grid-column: span 2;
`;

const SelectBox = styled.div`
  ${flexCenter}
  min-width: 0;
  padding: 0 2px 0 4px;
  border: 1px solid ${({ $filled }) => ($filled ? "#f3f3f3" : "#e6e6e6")};
  border-radius: 3px;
  background: ${({ $filled }) => ($filled ? "#f3f3f3" : "#fff")};
  ${({ $wide }) => $wide && "grid-column: span 2;"}
  select {
    flex: 1;
    min-width: 0;
    appearance: none;
  }
`;

const PanelScroll = styled.div`
  position: absolute;
  top: 59px;
  right: 1px;
  width: 4px;
  height: 416px;
  border-radius: 2px;
  background: #d2d2d2;
`;

const HelpButton = styled.button`
  position: absolute;
  right: 17px;
  bottom: 17px;
  width: 23px;
  height: 23px;
  border-radius: 50%;
  background: #1e1e1e;
  color: #fff;
  font-size: 13px;
  font-weight: 300;
`;

const Callout = styled.div`
  position: absolute;
  left: 313px;
  top: 457px;
  color: #fb2c0b;
  font-family: "Noto Sans CJK JP", sans-serif;
  font-size: 35px;
  font-weight: 700;
  line-height: 43px;
  white-space: nowrap;
`;

const Arrow = styled.svg`
  position: absolute;
  top: 240px;
  right: 0;
  width: 280px;
  height: 230px;
  pointer-events: none;
`;

export default App
